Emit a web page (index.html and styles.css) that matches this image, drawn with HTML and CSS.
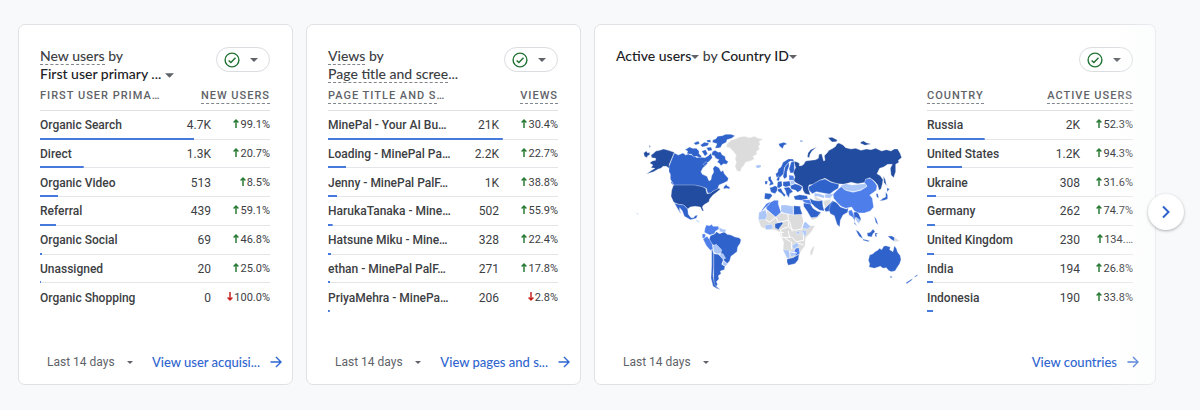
FILE: index.html
```
<!DOCTYPE html>
<html lang="en">
<head>
<meta charset="utf-8">
<meta name="viewport" content="width=device-width, initial-scale=1">
<title>Reports snapshot</title>
<link rel="stylesheet" href="styles.css">
</head>
<body>
<svg class="defs" aria-hidden="true">
  <symbol id="up" viewBox="0 0 6 9"><path d="M3 9V1.2M.6 3.6 3 1.1l2.4 2.5" fill="none" stroke="currentColor" stroke-width="1.5"/></symbol>
  <symbol id="down" viewBox="0 0 6 9"><path d="M3 0v7.8M.6 5.4 3 7.9l2.4-2.5" fill="none" stroke="currentColor" stroke-width="1.5"/></symbol>
  <symbol id="caret" viewBox="0 0 8 4"><path d="M0 0h8L4 4z" fill="currentColor"/></symbol>
  <symbol id="check" viewBox="0 0 16 16"><circle cx="8" cy="8" r="6.9" fill="none" stroke="currentColor" stroke-width="1.4"/><path d="m4.6 8.4 2.3 2.2 4.6-4.8" fill="none" stroke="currentColor" stroke-width="1.4"/></symbol>
  <symbol id="arrow" viewBox="0 0 12 12"><path d="M.5 6h10.3M6 1l5 5-5 5" fill="none" stroke="currentColor" stroke-width="1.4"/></symbol>
</svg>

<main class="cards">
  <section class="card">
    <header class="card-head">
      <h2 class="title"><span class="hint">New users</span> by<br><button class="pick" type="button">First user primary ... <svg class="caret wide"><use href="#caret"/></svg></button></h2>
      <button class="pill" type="button" aria-label="Data quality"><svg class="check"><use href="#check"/></svg><svg class="caret"><use href="#caret"/></svg></button>
    </header>
    <table class="data">
      <colgroup><col><col class="col-value"><col class="col-change"></colgroup>
      <thead><tr><th scope="col">FIRST USER PRIMA…</th><th scope="col" colspan="2"><span class="hint">NEW USERS</span></th></tr></thead>
      <tbody>
        <tr style="--bar:67%"><th scope="row">Organic Search</th><td>4.7K</td><td class="change"><svg class="up"><use href="#up"/></svg>99.1%</td></tr>
        <tr style="--bar:19%"><th scope="row">Direct</th><td>1.3K</td><td class="change"><svg class="up"><use href="#up"/></svg>20.7%</td></tr>
        <tr style="--bar:8%"><th scope="row">Organic Video</th><td>513</td><td class="change"><svg class="up"><use href="#up"/></svg>8.5%</td></tr>
        <tr style="--bar:7%"><th scope="row">Referral</th><td>439</td><td class="change"><svg class="up"><use href="#up"/></svg>59.1%</td></tr>
        <tr style="--bar:1%"><th scope="row">Organic Social</th><td>69</td><td class="change"><svg class="up"><use href="#up"/></svg>46.8%</td></tr>
        <tr style="--bar:0.4%"><th scope="row">Unassigned</th><td>20</td><td class="change"><svg class="up"><use href="#up"/></svg>25.0%</td></tr>
        <tr style="--bar:0%"><th scope="row">Organic Shopping</th><td>0</td><td class="change"><svg class="down"><use href="#down"/></svg>100.0%</td></tr>
      </tbody>
    </table>
    <footer class="card-foot">
      <button class="range" type="button">Last 14 days <svg class="caret small"><use href="#caret"/></svg></button>
      <a class="more" href="#">View user acquisi... <svg class="arrow"><use href="#arrow"/></svg></a>
    </footer>
  </section>

  <section class="card">
    <header class="card-head">
      <h2 class="title"><span class="hint">Views</span> by<br><span class="hint">Page title and scree</span>...</h2>
      <button class="pill" type="button" aria-label="Data quality"><svg class="check"><use href="#check"/></svg><svg class="caret"><use href="#caret"/></svg></button>
    </header>
    <table class="data">
      <colgroup><col><col class="col-value"><col class="col-change"></colgroup>
      <thead><tr><th scope="col"><span class="hint">PAGE TITLE AND S</span>…</th><th scope="col" colspan="2"><span class="hint">VIEWS</span></th></tr></thead>
      <tbody>
        <tr style="--bar:76%"><th scope="row">MinePal - Your AI Bu…</th><td>21K</td><td class="change"><svg class="up"><use href="#up"/></svg>30.4%</td></tr>
        <tr style="--bar:8%"><th scope="row">Loading - MinePal Pa…</th><td>2.2K</td><td class="change"><svg class="up"><use href="#up"/></svg>22.7%</td></tr>
        <tr style="--bar:4%"><th scope="row">Jenny - MinePal PalF…</th><td>1K</td><td class="change"><svg class="up"><use href="#up"/></svg>38.8%</td></tr>
        <tr style="--bar:2%"><th scope="row">HarukaTanaka - Mine…</th><td>502</td><td class="change"><svg class="up"><use href="#up"/></svg>55.9%</td></tr>
        <tr style="--bar:1.3%"><th scope="row">Hatsune Miku - Mine…</th><td>328</td><td class="change"><svg class="up"><use href="#up"/></svg>22.4%</td></tr>
        <tr style="--bar:1%"><th scope="row">ethan - MinePal PalF…</th><td>271</td><td class="change"><svg class="up"><use href="#up"/></svg>17.8%</td></tr>
        <tr style="--bar:0.8%"><th scope="row">PriyaMehra - MinePa…</th><td>206</td><td class="change"><svg class="down"><use href="#down"/></svg>2.8%</td></tr>
      </tbody>
    </table>
    <footer class="card-foot">
      <button class="range" type="button">Last 14 days <svg class="caret small"><use href="#caret"/></svg></button>
      <a class="more" href="#">View pages and s... <svg class="arrow"><use href="#arrow"/></svg></a>
    </footer>
  </section>

  <section class="card">
    <header class="card-head">
      <h2 class="title"><button class="pick" type="button">Active users<svg class="caret"><use href="#caret"/></svg></button> by <button class="pick" type="button">Country ID<svg class="caret"><use href="#caret"/></svg></button></h2>
      <button class="pill" type="button" aria-label="Data quality"><svg class="check"><use href="#check"/></svg><svg class="caret"><use href="#caret"/></svg></button>
    </header>
    <div class="split">
      <svg class="map" viewBox="0 0 870 510" role="img" aria-label="Active users by country">
        <g class="c-none">
          <path d="M288 56 300 46 312 42 326 36 340 34 356 38 370 34 382 40 396 42 384 50 388 58 382 64 386 72 376 80 378 88 366 94 370 102 358 108 344 112 338 122 332 128 328 140 318 138 312 124 316 112 312 100 316 92 308 80 296 68 286 66Z"/>
          <path d="M382 284 404 284 408 256 434 276 450 264 486 270 512 268 518 290 532 302 552 302 540 322 524 338 522 362 508 382 504 398 474 404 456 376 458 352 450 334 446 322 430 314 410 314 390 306Z"/>
          <path d="M538 378 548 362 550 368 544 388 538 392Z"/>
          <path d="m790 336 16 12-14 3Z"/>
          <path d="M576 228 600 222 596 236 582 250Z"/><path d="m540 276 14-6 18-4-14 14-16 6Z"/>
          <path d="m552 214 20 10-4 8-18-10Z"/>
        </g>
        <g class="c-dark">
          <path d="m38 84 8-6 4 6 6-2 0 8-6 2-2 6-8-4ZM54 61l5 3-3 4Z"/>
          <path d="M60 90 66 86 75 78 86 76 98 72 112 76 130 82 114 120 122 134 114 130 106 124 96 124 90 130 82 132 68 140 46 147 62 136 72 130 60 128 66 120 56 114 64 108 74 106 74 100 62 98Z"/>
          <path d="M128 178H190L214 184 224 190 228 206 238 204 254 192 264 190 268 193 254 204 246 210 236 222 234 230 218 240 214 246 218 258 214 258 208 246 192 244 178 246 170 252 158 240 142 238 128 232 120 214 122 196Z"/>
          <path d="M488 108 500 112 506 116 504 122 512 122 518 118 524 108 540 106 554 104 562 100 564 88 572 86 578 108 582 106 580 92 588 84 594 76 606 70 614 64 618 56 624 54 636 60 644 68 660 72 674 70 690 76 706 72 720 74 734 70 752 78 766 74 780 78 790 72 800 72 808 86 812 98 802 106 804 112 794 118 794 140 788 158 780 150 778 130 784 118 770 118 758 126 746 130 738 146 748 152 756 164 754 178 750 192 744 196 740 180 730 168 716 158 704 164 704 172 680 176 660 172 640 178 618 176 600 170 582 160 566 166 548 178 534 180 532 190 538 210 522 206 516 196 514 184 500 176 486 168 492 156 486 140 494 128Z"/>
          <path d="m529 96 2-12 8-10 18-8-14 12-6 10-2 10Z"/><path d="m591 38 12-1 16 8-3 5-13 1ZM690 50l8-2 8 5 14 4-18 4-14-6Z"/>
          <path d="m757 152 6 12 4 20-8-12Z"/>
        </g>
        <g class="c-high">
          <path d="M130 84 142 90 156 84 164 90 172 87 188 92 198 98 206 96 222 98 232 92 240 84 244 98 236 108 228 114 224 122 216 128 210 140 214 148 228 154 234 168 240 164 242 152 248 142 246 130 252 122 264 128 270 140 276 136 280 146 292 160 290 168 278 174 264 180 260 192 246 198 240 204 230 204 226 190 210 184 190 180H128L118 162 118 148 114 140 114 124Z"/>
          <path d="m244 80 8-4 10 6 6-2 6 10 8 4 2 10 8 6-6 8-8-2-8 6-6-8-6-2 6-8-10-4-4-8-8-2ZM246 44l8-2 6-8 14-2 10-4 16 0 12 4-10 8-14 4-2 8-12 6-6 10-16 2 6-14-14-4ZM176 66l8 4 12 0 8 8 0 8 8 8-4 4-12-4-8 2-6-8-14-2 2-8-8-4ZM208 60l12-8 14 2-4 8-16 4ZM188 54l14-6 4 8-12 4ZM212 78l12-4 6 12-8 8ZM226 68l14-2 4 10-12 2ZM226 46l12-2 2 8-10 0ZM216 118l10-8 4 6-10 6Z"/>
          <path d="m278 186 8-8 2 4 8 4 0 6-10-2-8 2ZM120 168l6 8 2 6-8-8Z"/>
          <path d="M130 234 142 238 158 240 170 252 172 268 180 278 188 278 192 272 200 270 196 280 178 284 160 274 154 258 146 248 146 258 152 266 146 262 138 248Z"/>
          <path d="M238 332 252 326 256 320 266 326 280 320 288 328 300 330 312 336 324 338 330 344 328 354 320 366 318 380 308 388 300 394 296 408 288 416 278 406 274 392 264 376 250 362 242 356 234 344Z"/>
          <path d="M248 386 262 388 278 402 272 418 282 424 280 434 268 438 270 446 262 452 264 462 256 470 260 478 256 484 268 494 256 490 248 476Z"/>
          <path d="m242 366 6 20 0 40-2 24 4 26 10 16-14-8-6-24 2-40Z"/>
          <path d="m443 56 16-4 10 5-10 4-4 10-10-8ZM507 46l10 2-8 3Z"/>
          <path d="m434 146 6-4 2-10 8-6 6-14 16-10 14 0 4 8-12-2-10 10-8 10-2 18-12 12-10-2ZM456 154l6-28 12-16 0 14-6 16 0 16-8 6ZM478 144l-4-12 6-20 10-4 0 28-4 8Z"/>
          <path d="m412 156 8-2 0 8 6 10 2 6-14 4 4-10-6-6ZM402 168l8 0-2 10-6 0Z"/>
          <path d="m416 188 8-2 8-4 8 4-2 12-6 8-12-4ZM402 204l18 2 4 6-10 12-8-2-6 0ZM440 170l12-2 2 14-10 8-6-4ZM456 170l20-2 4 14-16 4-8-4ZM440 192l10-2 6 12 8 8-4 6-8-10-12-8ZM458 188l16-2 12 14-10 6-2 12-8-10-2-10Z"/>
          <path d="m478 182 14-6 12 4 10 6-4 10-10 6-6-6-14-4Z"/><path d="m488 214 18-5 22 3 3 9-17 5-22-2ZM436 166l6-14 4 8-2 8Z"/>
          <path d="M532 186 548 176 566 166 582 162 600 172 624 178 622 190 608 198 596 208 576 204 556 200 544 206 534 196Z"/>
          <path d="m536 220 12 6 16 2 10-2 2 18 4 14-14-2-14-10-12-12ZM518 234l20 2 8 14 12 8 12 4-12 14-18 2-12-20-10-14ZM580 252l16-16 10-10 0 14-8 18-14 2Z"/>
          <path d="m598 238 10-10 10 6 10 12 18 6 6-4-2 14-14 8-8 16-2 20-8-8-8-26-12-6-4-10Z"/>
          <path d="m488 242 20 2 0 6 6 18-26 1ZM432 296l20-5 4 4-8 10-6 9-10-6ZM468 402l18-4 18-10-2 16-10 12-20 5-4-9Z"/>
          <path d="m668 262 10-2 6 8 6 14-4 10-8-8-4-6-4 12 8 12-8-6ZM674 315l8 4 8 10 6 13-12-8ZM708 324l10-2 8-10 6 8-6 6-4 10-12-2ZM696 342l20 5-4 3-16-4ZM732 324l10 0-6 4 2 8-6-2ZM730 274l6 8 6 18-8-8ZM770 333l12 0 8 4 0 12-10-6ZM735 206l6 0 2 14-6-4ZM768 188l8 4-8 8ZM764 200l6 10 0 12-10 4-14 2 10-8 8-4Z"/>
          <path d="M716 390 726 386 732 380 740 376 746 370 752 374 758 364 764 362 778 366 776 374 786 380 790 362 796 370 800 382 808 392 810 404 806 416 798 428 792 438 780 440 772 436 766 428 756 430 748 424 730 430 714 426 716 416 712 406ZM776 453l8 2-4 5ZM824 474l12-8 10-6-4 6-14 10ZM850 455l10-7-2 6-8 3Z"/>
        </g>
        <g class="c-mid">
          <path d="m226 300 10 2 6-4 4 6 16 0 2 8-10 6-4 8-14 4-16-8 2-12ZM214 326l10 2-2 10-8 2ZM216 342l12-8 8 10 8 14 2 14-8 4-12-14Z"/>
          <path d="M622 192 632 184 644 196 666 202 690 196 708 184 700 174 704 162 718 160 730 170 738 182 736 196 722 206 716 210 724 220 726 234 728 246 718 258 700 264 684 264 670 258 662 246 644 250 630 244 618 232 608 220 606 208Z"/>
          <path d="m406 246 12-14 12-6 12 0 0 12 8 24-16 14-28-24ZM392 256l14-20 12-6-4 10-12 8-12 14ZM652 258l10-4 6 14 2 18-6-10-10-6ZM474 150l14 2 2 14-16 0ZM514 224l22 0 6 14-10-2-14-4ZM494 370l10-2 2 18-12 6-8-6Z"/>
        </g>
        <g class="c-low">
          <path d="m246 362 10-4 16 16-2 12-14 0-8-6ZM264 388l12-2 8 14-8 4ZM276 408l14 8-6 8-8-4ZM264 306l10 6 12 2-4 8-16-2ZM374 122l6-2 10 0 0 6-8 4-6-2ZM194 284l10 4 2 5-10-5ZM11 262l4 1 8 4-1 3-6-5Z"/>
          <path d="m628 182 16-6 20 4 20-2 20-2 4 8-18 10-24 6-26-6ZM550 204l16 2 16 6-4 8-18-6-10 2ZM582 208l26-2-10 14-16-2ZM674 276l12 8-2 12-8-8ZM478 166l12 2 2 8-14 4Z"/>
          <path d="m384 262 20-8 4 18-4 12-22 0ZM450 240l16 0 20 4 0 26-26-6-10-4ZM402 300l22-2 0 14-20 2ZM516 296l8-6 14 14-8 8-16-2ZM512 318l14-2 0 14-12 4ZM456 374l18 2 2 22-8 2ZM476 378l14 0 4 12-14 6ZM482 362l18-10 4 12-16 8ZM496 320l8-2 2 8-8 2Z"/>
        </g>
        <path class="borders" d="m404 284 12 8 18-16 8 16 10-2 20-4-2-20m4 20-2 20 18 10 22-4 8-26m-50 20-22 8 6 24 28-2 14 14 22-4-2-24m-40 16-4-20m-14 4-24 0m28 18 20 12 0 20m18-18 18 6m-20 24-24-4m10-60-8-30m-84 34 16-2 4 18"/>
      </svg>
      <table class="data narrow">
        <colgroup><col><col class="col-value"><col class="col-change"></colgroup>
        <thead><tr><th scope="col"><span class="hint">COUNTRY</span></th><th scope="col" colspan="2"><span class="hint">ACTIVE USERS</span></th></tr></thead>
        <tbody>
          <tr style="--bar:28%"><th scope="row">Russia</th><td>2K</td><td class="change"><svg class="up"><use href="#up"/></svg>52.3%</td></tr>
          <tr style="--bar:17%"><th scope="row">United States</th><td>1.2K</td><td class="change"><svg class="up"><use href="#up"/></svg>94.3%</td></tr>
          <tr style="--bar:4.4%"><th scope="row">Ukraine</th><td>308</td><td class="change"><svg class="up"><use href="#up"/></svg>31.6%</td></tr>
          <tr style="--bar:4%"><th scope="row">Germany</th><td>262</td><td class="change"><svg class="up"><use href="#up"/></svg>74.7%</td></tr>
          <tr style="--bar:3.4%"><th scope="row">United Kingdom</th><td>230</td><td class="change"><svg class="up"><use href="#up"/></svg>134.…</td></tr>
          <tr style="--bar:3%"><th scope="row">India</th><td>194</td><td class="change"><svg class="up"><use href="#up"/></svg>26.8%</td></tr>
          <tr style="--bar:3%"><th scope="row">Indonesia</th><td>190</td><td class="change"><svg class="up"><use href="#up"/></svg>33.8%</td></tr>
        </tbody>
      </table>
    </div>
    <footer class="card-foot">
      <button class="range" type="button">Last 14 days <svg class="caret small"><use href="#caret"/></svg></button>
      <a class="more" href="#">View countries <svg class="arrow"><use href="#arrow"/></svg></a>
    </footer>
  </section>
  <div class="fade"></div>
  <button class="next" type="button" aria-label="Next cards"><svg viewBox="0 0 10 14"><path d="m2 1.5 5.5 5.5L2 12.5" fill="none" stroke="currentColor" stroke-width="2"/></svg></button>
</main>
</body>
</html>
```
FILE: styles.css
```
* { box-sizing: border-box; }
body { margin: 0; background: #f8f9fb; color: #3c4043; font: 12px/18px Roboto, sans-serif; }
button { padding: 0; border: 0; background: none; color: inherit; font: inherit; cursor: pointer; }
svg { flex: none; }
.defs { display: none; }

.cards { position: relative; display: grid; grid-template-columns: 275fr 275fr 562fr; gap: 13px; padding: 24px 44px 24px 18px; }
.card { display: flex; flex-direction: column; min-width: 0; padding: 22px 22px 13px 21px; border: 1px solid #dfe1e5; border-radius: 7px; background: #fff; }
.card-head { display: flex; justify-content: space-between; align-items: flex-start; height: 36px; }
.title { margin: 0; font: 500 14px/18px Lato, sans-serif; color: #3c4043; white-space: nowrap; }
.pick { color: #202124; }
.hint { border-bottom: 1px dashed #80868b; }
.caret { width: 8px; height: 4px; color: #5f6368; vertical-align: middle; }
.caret.wide { width: 9px; height: 5px; }
.caret.small { width: 6px; height: 3px; margin-left: 9px; }

.pill { display: flex; align-items: center; justify-content: space-between; width: 54px; height: 25px; padding: 0 11px 0 7px; border: 1px solid #dadce0; border-radius: 13px; background: #fff; }
.check { width: 16px; height: 16px; color: #1f7134; }

.data { width: 100%; height: 229px; border-spacing: 0; table-layout: fixed; }
.col-value { width: 40px; }
.col-change { width: 59px; }
.narrow .col-change { width: 53px; }
.data th, .data td { padding: 0; text-align: right; white-space: nowrap; font-weight: 400; }
.data th:first-child { text-align: left; }
.data thead tr { height: 28px; background: linear-gradient(#dfe1e5, #dfe1e5) left bottom / 100% 1px no-repeat; }
.data thead th { height: 28px; padding-bottom: 2px; color: #5f6368; font-size: 11px; letter-spacing: 1px; font-weight: 500; }
.data thead .hint { padding-bottom: 1px; }
.data tbody th { font-weight: 500; }
.data tbody tr { background: linear-gradient(#4579dc, #4579dc) left bottom / var(--bar) 2px no-repeat, linear-gradient(#e4e6e9, #e4e6e9) left bottom / 100% 1px no-repeat; }
.data tbody tr:last-child { background: linear-gradient(#4579dc, #4579dc) left bottom / var(--bar) 2px no-repeat; }
.data .change { font-size: 11px; }
.up, .down { width: 6px; height: 9px; margin-right: 1px; color: #2a7b35; }
.down { color: #c5221f; }

.split { display: grid; grid-template-columns: minmax(0, 1fr) 206px; column-gap: 12px; }
.map { width: 100%; max-width: 290px; margin: 42px 0 0 15px; }
.map path { stroke: #fff; stroke-width: 1; stroke-linejoin: round; }
.map .c-none { fill: #dcdcdc; }
.map .c-dark { fill: #224c9f; }
.map .c-high { fill: #2f62cb; }
.map .c-mid { fill: #4d7eea; }
.map .c-low { fill: #aac5f8; }
.map .borders { fill: none; stroke-width: 3; }

.card-foot { display: flex; align-items: center; justify-content: space-between; margin: 41px -12px 0 7px; color: #5f6368; white-space: nowrap; }
.more { display: flex; align-items: center; gap: 10px; color: #2f66d0; font: 500 13px/18px Lato, sans-serif; text-decoration: none; }
.arrow { width: 12px; height: 12px; }
.split + .card-foot { margin-right: -6px; }

.fade { position: absolute; top: 0; right: 0; bottom: 0; width: 90px; pointer-events: none; background: linear-gradient(90deg, rgba(248, 249, 251, 0), rgba(248, 249, 251, .9)); }
.next { position: absolute; right: 16px; top: 194px; display: grid; place-items: center; width: 36px; height: 36px; border-radius: 50%; background: #fff; color: #2f62cb; box-shadow: 0 1px 3px rgba(60, 64, 67, .4); }
.next svg { width: 10px; height: 14px; }
```
